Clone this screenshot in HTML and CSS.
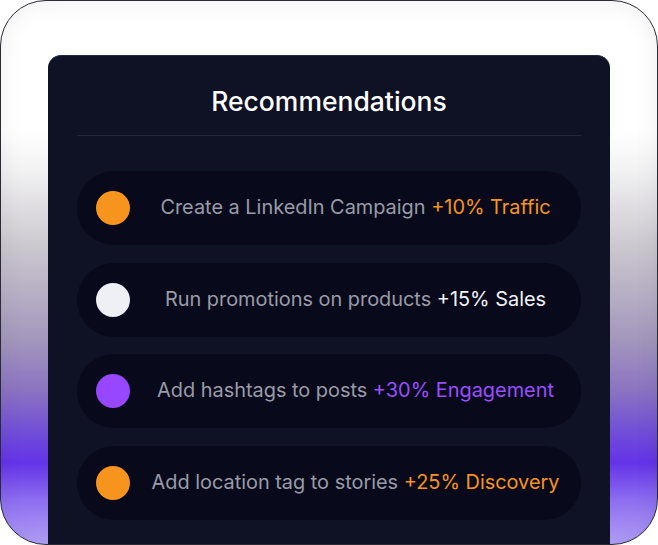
FILE: index.html
```html
<!DOCTYPE html>
<html>
<head>
<meta charset="utf-8">
<link rel="stylesheet" href="styles.css">
</head>
<body>
<div class="frame">
  <div class="card">
    <h1 class="title">Recommendations</h1>
    <div class="divider"></div>
    <ul class="list">
      <li class="row"><span class="dot dot-orange"></span><span class="text">Create a LinkedIn Campaign <span class="orange">+10% Traffic</span></span></li>
      <li class="row"><span class="dot dot-white"></span><span class="text">Run promotions on products <span class="white">+15% Sales</span></span></li>
      <li class="row"><span class="dot dot-purple"></span><span class="text">Add hashtags to posts <span class="purple">+30% Engagement</span></span></li>
      <li class="row"><span class="dot dot-orange"></span><span class="text">Add location tag to stories <span class="orange">+25% Discovery</span></span></li>
    </ul>
  </div>
</div>
</body>
</html>
```
FILE: styles.css
```css
html, body {
  margin: 0;
  padding: 0;
  background: #ffffff;
  font-family: Inter, "Noto Sans", sans-serif;
}
.frame {
  box-sizing: border-box;
  width: 658px;
  height: 545px;
  border: 1px solid #2a2a35;
  border-radius: 46px;
  overflow: hidden;
  padding: 54px 47px 0 47px;
  background: linear-gradient(to bottom, #ffffff 0%, #ffffff 24%, #f2f2f3 31%, #c9c5cd 46%, #a498bc 62%, #8a72c2 72%, #7150d6 79%, #6433e8 85%, #8d6ef0 92%, #b3a0f8 100%);
  box-shadow: inset 0 0 24px rgba(20, 20, 40, 0.07);
}
.card {
  box-sizing: border-box;
  height: 100%;
  background: #0f1224;
  border-top: 1px solid #1f2b4b;
  border-radius: 13px 13px 0 0;
  padding: 28px 29px 0 29px;
}
.title {
  margin: 0;
  text-align: center;
  color: #ffffff;
  font-size: 26.5px;
  font-weight: 500;
  line-height: 34px;
}
.divider {
  height: 1px;
  background: #1c2a44;
  margin-top: 17px;
}
.list {
  list-style: none;
  margin: 35px 0 0 0;
  padding: 0;
  display: flex;
  flex-direction: column;
  gap: 17.7px;
}
.row {
  display: flex;
  align-items: center;
  height: 74px;
  border-radius: 37px;
  background: #080a1c;
  padding-left: 19px;
}
.dot {
  width: 34px;
  height: 34px;
  border-radius: 50%;
  flex: none;
}
.dot-orange { background: #f7941e; }
.dot-white { background: #eef0f5; }
.dot-purple { background: #9747ff; }
.text {
  flex: 1;
  text-align: center;
  color: #9a9ba6;
  font-size: 19.9px;
  line-height: 26px;
  padding-bottom: 2px;
}
.orange { color: #f7941e; }
.white { color: #f2f3f7; }
.purple { color: #9b4dff; }
```
